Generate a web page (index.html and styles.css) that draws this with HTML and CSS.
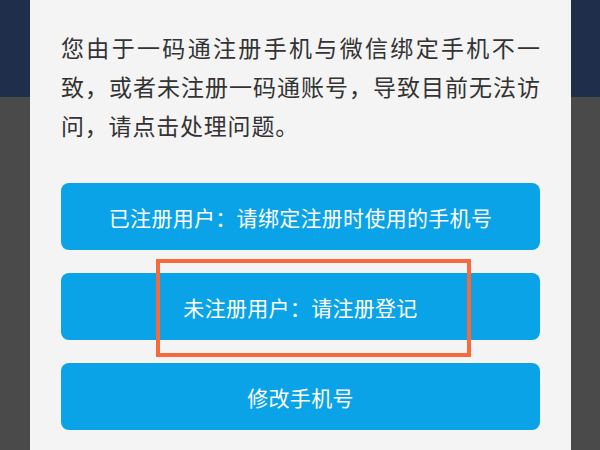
FILE: index.html
```html
<!DOCTYPE html>
<html lang="zh-CN">
<head>
<meta charset="utf-8">
<link rel="stylesheet" href="styles.css">
</head>
<body>
<div class="page">
  <div class="topbar"></div>
  <div class="content"></div>
</div>
<div class="modal">
  <p class="msg">
    <span class="ln j">您由于一码通注册手机与微信绑定手机不一</span>
    <span class="ln j">致，或者未注册一码通账号，导致目前无法访</span>
    <span class="ln">问，请点击处理问题。</span>
  </p>
  <div class="actions">
    <div class="btn">已注册用户：请绑定注册时使用的手机号</div>
    <div class="btn">未注册用户：请注册登记<span class="mark"></span></div>
    <div class="btn">修改手机号</div>
  </div>
</div>
</body>
</html>
```

FILE: styles.css
```css
html, body {
  margin: 0;
  padding: 0;
}
body {
  width: 600px;
  height: 450px;
  overflow: hidden;
  position: relative;
  background: #4a4a4a;
  font-family: "Noto Sans CJK SC", "Noto Sans", sans-serif;
}
.page {
  display: flex;
  flex-direction: column;
  height: 450px;
}
.topbar {
  height: 97px;
  background: #1f2e4a;
}
.content {
  flex: 1;
  background: #4a4a4a;
}
.modal {
  position: absolute;
  left: 30px;
  top: 0;
  width: 541px;
  height: 460px;
  box-sizing: border-box;
  padding: 28px 31px 0 31px;
  background: #f4f4f4;
}
.msg {
  margin: 0;
  font-size: 23px;
  line-height: 39px;
  letter-spacing: 0.8px;
  color: #333333;
}
.ln {
  display: block;
  white-space: nowrap;
}
.ln.j {
  text-align: justify;
  text-align-last: justify;
  letter-spacing: 0;
}
.actions {
  margin-top: 38px;
  display: flex;
  flex-direction: column;
  gap: 23px;
}
.btn {
  position: relative;
  height: 67px;
  border-radius: 8px;
  background: #0ba3e7;
  color: #ffffff;
  font-size: 21px;
  letter-spacing: 0.3px;
  display: flex;
  align-items: center;
  justify-content: center;
}
.mark {
  position: absolute;
  left: 95px;
  top: -14px;
  width: 315px;
  height: 98px;
  box-sizing: border-box;
  border: 4px solid #f76a3c;
}
```
